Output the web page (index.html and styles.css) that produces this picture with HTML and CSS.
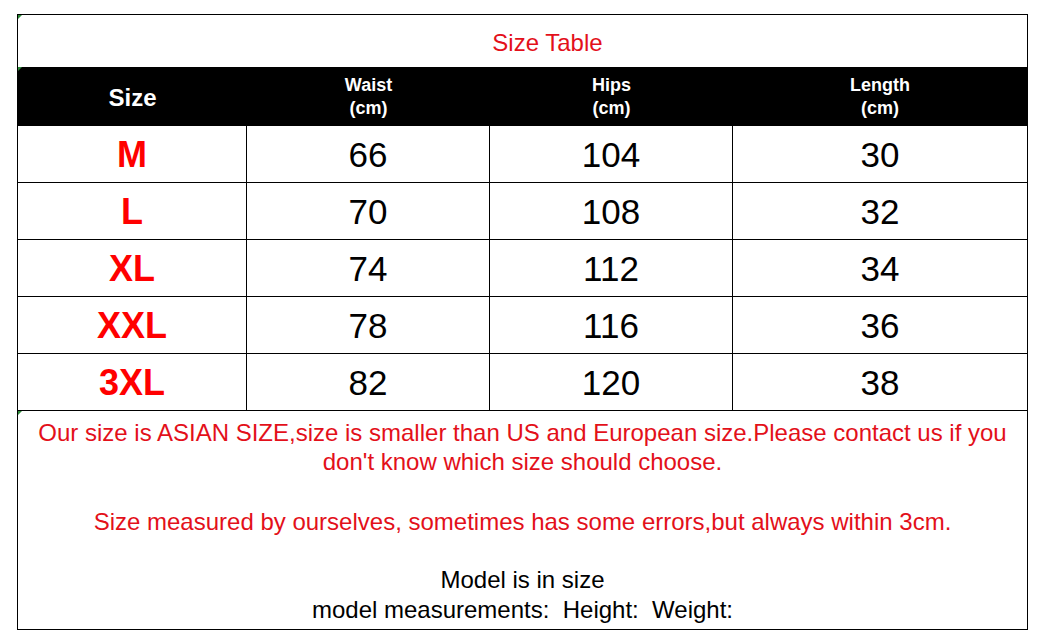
FILE: index.html
```html
<!DOCTYPE html>
<html>
<head>
<meta charset="utf-8">
<link rel="stylesheet" href="styles.css">
</head>
<body>
<div class="sheet">
  <div class="title mark">Size Table</div>
  <div class="grid head mark">
    <div class="cell size-h">Size</div>
    <div class="cell">Waist<br>(cm)</div>
    <div class="cell">Hips<br>(cm)</div>
    <div class="cell">Length<br>(cm)</div>
  </div>
  <div class="grid row"><div class="cell sz">M</div><div class="cell">66</div><div class="cell">104</div><div class="cell">30</div></div>
  <div class="grid row"><div class="cell sz">L</div><div class="cell">70</div><div class="cell">108</div><div class="cell">32</div></div>
  <div class="grid row"><div class="cell sz">XL</div><div class="cell">74</div><div class="cell">112</div><div class="cell">34</div></div>
  <div class="grid row"><div class="cell sz">XXL</div><div class="cell">78</div><div class="cell">116</div><div class="cell">36</div></div>
  <div class="grid row"><div class="cell sz">3XL</div><div class="cell">82</div><div class="cell">120</div><div class="cell">38</div></div>
  <div class="notes mark">
    <p class="red first">Our size is ASIAN SIZE,size is smaller than US and European size.Please contact us if you<br>don't know which size should choose.</p>
    <p class="red second">Size measured by ourselves, sometimes has some errors,but always within 3cm.</p>
    <p class="black">Model is in size<br>model measurements:&nbsp; Height:&nbsp; Weight:</p>
  </div>
</div>
</body>
</html>
```
FILE: styles.css
```css
html, body { margin: 0; padding: 0; background: #fff; }
body { font-family: "Liberation Sans", Arial, sans-serif; }
.sheet {
  box-sizing: border-box;
  width: 1011px;
  margin: 14px 0 0 17px;
  border: 1px solid #000;
}
.mark { position: relative; }
.mark::before {
  content: "";
  position: absolute;
  left: 0; top: 0;
  width: 0; height: 0;
  border-top: 4px solid #2e8b3a;
  border-right: 4px solid transparent;
}
.title {
  height: 52px;
  display: flex;
  align-items: center;
  justify-content: center;
  color: #e3101a;
  font-size: 24px;
  padding: 4px 0 0 50px;
  box-sizing: border-box;
}
.grid {
  display: grid;
  grid-template-columns: 229px 243px 243px 294px;
}
.cell {
  display: flex;
  align-items: center;
  justify-content: center;
  text-align: center;
  box-sizing: border-box;
}
.grid .cell:not(:last-child) { border-right: 1px solid #000; }
.head {
  height: 58px;
  background: #000;
  color: #fff;
  font-weight: bold;
  font-size: 18px;
  line-height: 23px;
}
.head .cell { border-right: none !important; padding-top: 1px; }
.head .size-h { font-size: 24px; padding-top: 3px; }
.row {
  height: 57px;
  border-top: 1px solid #000;
  box-sizing: border-box;
  font-size: 35px;
  color: #000;
}
.row .cell { padding-top: 2px; }
.row .sz { color: #ff0000; font-weight: bold; font-size: 36px; }
.notes {
  border-top: 1px solid #000;
  height: 219px;
  box-sizing: border-box;
  text-align: center;
  font-size: 24px;
  line-height: 29px;
  padding: 7px 4px 0;
  white-space: nowrap;
}
.notes p { margin: 0; }
.red { color: #e3101a; }
.second { margin-top: 31px !important; }
.black { color: #000; margin-top: 29px !important; line-height: 30px; }
```
